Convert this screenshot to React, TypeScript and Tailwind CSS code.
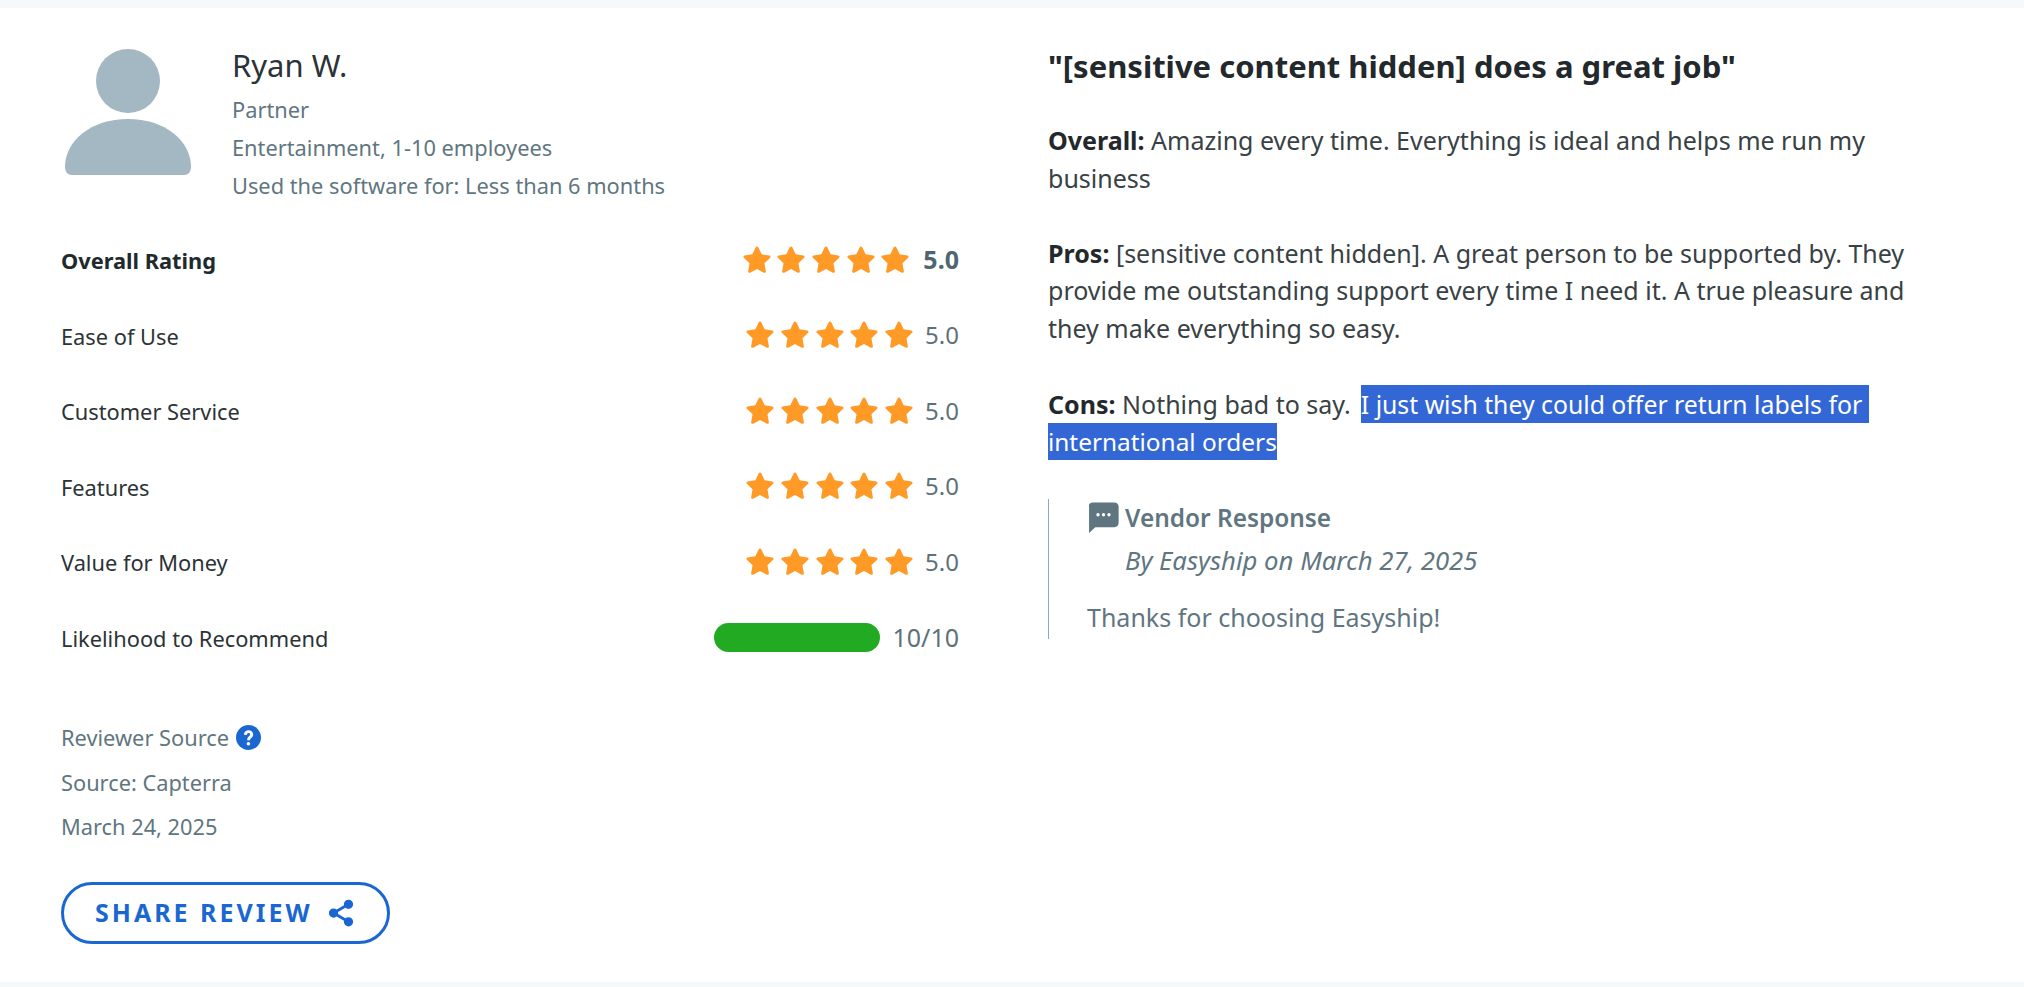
import React from "react";

const FONT = "[font-family:'Noto_Sans','Open_Sans',sans-serif]";

function Star() {
  return (
    <svg viewBox="0 0 24 24" className="w-[28px] h-[28px] shrink-0" fill="#ff9a27">
      <path d="M12 1.2c.5 0 .9.3 1.100.7l2.900 6.100 6.600.9c1 .1 1.400 1.400.7 2.100l-4.900 4.700 1.200 6.700c.2 1-.9 1.800-1.800 1.300L12 20.600l-5.800 3.100c-.9.5-2-.3-1.800-1.300l1.200-6.700-4.900-4.700c-.7-.7-.3-2 .7-2.100l6.600-.9 2.900-6.100c.2-.4.6-.7 1.100-.7z" />
    </svg>
  );
}

function Stars() {
  return (
    <div className="flex gap-[6.700px] mb-[5px]">
      <Star /><Star /><Star /><Star /><Star />
    </div>
  );
}

function RatingRow({ label, bold }: { label: string; bold?: boolean }) {
  return (
    <div className="flex items-center justify-between h-[75.5px]">
      <span className={bold ? "font-bold text-[#1f2a2e] mb-[1px]" : "text-[#2b3336]"}>{label}</span>
      <div className={bold ? "flex items-center gap-[14px]" : "flex items-center gap-[12px]"}>
        <Stars />
        <span className={bold ? "font-bold text-[#4f6672] text-[25px] mb-[3px]" : "text-[#5f7178] text-[24px] mb-[3px]"}>5.0</span>
      </div>
    </div>
  );
}

export default function App() {
  return (
    <div className={`w-[2024px] h-[987px] overflow-hidden bg-[#f5f9f9] pt-[8px] pb-[5px] ${FONT}`}>
      <div className="h-[974px] bg-white flex pl-[61px] pt-[40px]">
        <div className="w-[898px] shrink-0">
          <div className="flex">
            <svg viewBox="0 0 128 126" className="w-[126px] h-[126px] ml-[4px] mt-[1px] shrink-0" fill="#a3b8c3" preserveAspectRatio="none">
              <ellipse cx="64" cy="32" rx="32.5" ry="32" />
              <path d="M0 118 C0 92 26 70 64 70 C102 70 128 92 128 118 C128 123 125 126 121 126 H7 C3 126 0 123 0 118 Z" />
            </svg>
            <div className="ml-[41px] text-[21.8px] text-[#5f7680]">
              <div className="text-[31px] leading-[40px] text-[#2b3336] mt-[-3px]">Ryan W.</div>
              <div className="leading-[37.9px] mt-[6px]">Partner</div>
              <div className="leading-[37.9px]">Entertainment, 1-10 employees</div>
              <div className="leading-[37.9px]">Used the software for: Less than 6 months</div>
            </div>
          </div>
          <div className="mt-[19px] text-[21.8px]">
            <RatingRow label="Overall Rating" bold />
            <RatingRow label="Ease of Use" />
            <RatingRow label="Customer Service" />
            <RatingRow label="Features" />
            <RatingRow label="Value for Money" />
            <div className="flex items-center justify-between h-[75.5px]">
              <span className="text-[#2b3336]">Likelihood to Recommend</span>
              <div className="flex items-center gap-[12px]">
                <div className="w-[166px] h-[29px] mb-[3px] rounded-full bg-[#22aa22]" />
                <span className="text-[#5f7178] text-[25px] mb-[3px]">10/10</span>
              </div>
            </div>
          </div>
          <div className="mt-[40px] text-[21.8px] text-[#5f7680]">
            <div className="flex items-center gap-[7px] h-[44px]">
              Reviewer Source
              <svg viewBox="0 0 24 24" className="w-[25px] h-[25px] mb-[3px]">
                <circle cx="12" cy="12" r="12" fill="#1a67d2" />
                <path d="M7.600 9.400c0-2.600 2-4.300 4.500-4.300s4.400 1.600 4.400 3.900c0 3.100-3 3.200-3 5.700h-2.800c0-3.600 2.900-3.800 2.900-5.500 0-.9-.6-1.500-1.500-1.500s-1.600.7-1.700 1.900z" fill="#fff" />
                <circle cx="11.900" cy="18" r="1.700" fill="#fff" />
              </svg>
            </div>
            <div className="leading-[44px]">Source: Capterra</div>
            <div className="leading-[44px]">March 24, 2025</div>
          </div>
          <button className="mt-[33px] flex items-center gap-[13px] h-[62px] w-[329px] pl-[31px] rounded-full border-[3px] border-[#1a67d2] text-[#1a67d2] font-bold text-[25px] tracking-[3px]">
            SHARE REVIEW
            <svg viewBox="0 0 24 24" className="w-[30px] h-[30px]" fill="#1a67d2" stroke="#1a67d2" strokeWidth="2.200">
              <path d="M18 5 L6 12 L18 19" fill="none" />
              <circle cx="18" cy="5" r="2.600" />
              <circle cx="6" cy="12" r="2.600" />
              <circle cx="18" cy="19" r="2.600" />
            </svg>
          </button>
        </div>
        <div className="ml-[89px] w-[870px] text-[25px] leading-[37.5px] text-[#384144]">
          <h2 className="text-[31px] font-bold leading-[40px] text-[#22282b] mt-[-2px]">"[sensitive content hidden] does a great job"</h2>
          <p className="mt-[36px]"><b className="text-[#22282b]">Overall:</b> Amazing every time. Everything is ideal and helps me run my business</p>
          <p className="mt-[37.5px]"><b className="text-[#22282b]">Pros:</b> [sensitive content hidden]. A great person to be supported by. They provide me outstanding support every time I need it. A true pleasure and they make everything so easy.</p>
          <p className="mt-[38.5px]"><b className="text-[#22282b]">Cons:</b> Nothing bad to say.<span className="ml-[10px] bg-[#3367d6] text-white text-[24.8px] py-[2px] pr-[7px]">I just wish they could offer return labels for</span> <span className="bg-[#3367d6] text-white text-[24.4px] py-[2px]">international orders</span></p>
          <div className="mt-[38px] border-l border-[#86a9c9] pl-[38px] h-[140px] text-[#5f7680]">
            <div className="flex items-center font-semibold text-[24.4px]">
              <svg viewBox="0 0 24 24" className="w-[33px] h-[33px] mr-[5px]" fill="#5f7680">
                <path d="M4 1h16c1.700 0 3 1.300 3 3v12c0 1.700-1.300 3-3 3H6l-4.500 4.300V4C1 2.300 2.300 1 4 1z" />
                <circle cx="8" cy="10" r="1.200" fill="#fff" /><circle cx="12" cy="10" r="1.200" fill="#fff" /><circle cx="16" cy="10" r="1.200" fill="#fff" />
              </svg>
              Vendor Response
            </div>
            <div className="italic text-[25.7px] ml-[38px] mt-[6px]">By Easyship on March 27, 2025</div>
            <div className="mt-[19px]">Thanks for choosing Easyship!</div>
          </div>
        </div>
      </div>
    </div>
  );
}
